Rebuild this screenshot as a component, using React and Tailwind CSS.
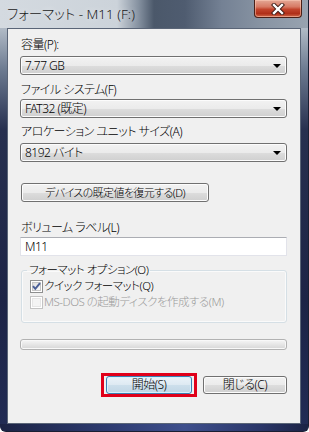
import React from "react";

const btnFace =
  "bg-[linear-gradient(#f2f2f2_0%,#ebebeb_50%,#dddddd_51%,#cfcfcf_100%)] border border-[#707070] rounded-[3px] shadow-[inset_0_0_0_1px_#fcfcfc]";

function Combo({ value }) {
  return (
    <div
      className={`h-[19px] w-[267px] flex items-center pl-[4px] pr-[5px] ${btnFace}`}
    >
      <span className="flex-1 text-[12px] leading-none text-black">{value}</span>
      <svg width="8" height="4" viewBox="0 0 8 4">
        <path d="M0 0H8L4 4Z" fill="#000" />
      </svg>
    </div>
  );
}

function Label({ children, className = "" }) {
  return (
    <div className={`h-[14px] text-[12px] leading-[14px] text-black ${className}`}>
      {children}
    </div>
  );
}

function Check({ checked, disabled, children }) {
  const id = checked ? "cbOn" : "cbOff";
  return (
    <div className="h-[16px] flex items-center gap-[1px]">
      <svg width="13" height="13" viewBox="0 0 13 13">
        <defs>
          <linearGradient id={id} x1="0" y1="0" x2="1" y2="1">
            <stop offset="0" stopColor={disabled ? "#f4f4f4" : "#dcdcdc"} />
            <stop offset="1" stopColor={disabled ? "#f4f4f4" : "#fbfbfb"} />
          </linearGradient>
        </defs>
        <rect x="0.5" y="0.5" width="12" height="12" fill="#fff" stroke={disabled ? "#c3c3c3" : "#8e8f8f"} />
        <rect x="2.5" y="2.5" width="8" height="8" fill={`url(#${id})`} stroke={disabled ? "#e6e6e6" : "#c6c6c6"} />
        {checked && (
          <path d="M3 6.2L5.3 8.8L10 3.2" fill="none" stroke="#4a5f97" strokeWidth="2" />
        )}
      </svg>
      <span className={`text-[11.5px] leading-none ${disabled ? "text-[#9a9a9a]" : "text-black"}`}>
        {children}
      </span>
    </div>
  );
}

export default function App() {
  return (
    <div className="w-[309px] h-[432px] overflow-hidden font-['Noto_Sans','Noto_Sans_CJK_JP',sans-serif] font-light [font-feature-settings:'palt'] tracking-[-0.5px]">
      <div className="w-[309px] h-[432px] flex flex-col rounded-br-[6px] rounded-bl-[6px] border-r border-b border-[#1a1f33] bg-[linear-gradient(180deg,#c3cbd4_0px,#aeb8c4_30px,#6c7a90_70px,#27304f_130px,#1d2446_300px,#222c55_100%)]">
        {/* title bar */}
        <div className="h-[28px] flex items-start bg-[linear-gradient(90deg,#d4dae0_0%,#ccd3da_38%,#8591a0_45%,#4b586a_50%,#4f5c70_60%,#748194_72%,#8894a3_85%,#98a3b0_100%)]">
          <div className="pl-[7px] pt-[5px] text-[13.5px] leading-[18px] tracking-normal text-[#1a1a1a] [text-shadow:0_0_6px_rgba(255,255,255,0.7)]">
            フォーマット - M11 (F:)
          </div>
          <div className="ml-auto mr-[6px] w-[48px] h-[18px] rounded-b-[4px] border border-t-0 border-[#4a2018] bg-[linear-gradient(#e4a896_0%,#d77a64_40%,#c2442c_55%,#b02f18_80%,#d0694a_100%)] flex items-center justify-center shadow-[inset_0_0_0_1px_rgba(255,210,190,0.5)]">
            <svg width="14" height="12" viewBox="0 0 14 12">
              <path d="M3 2L11 10M11 2L3 10" stroke="#3b1a14" strokeWidth="4.2" strokeLinecap="square" />
              <path d="M3 2L11 10M11 2L3 10" stroke="#fff" strokeWidth="2.4" strokeLinecap="square" />
            </svg>
          </div>
        </div>

        {/* client area */}
        <div className="ml-[7px] w-[294px] h-[396px] border border-[#5a6577] bg-[#f0f0f0] pl-[12px] pr-[13px] flex flex-col">
          <Label className="mt-[9px] pl-[1px]">容量(P):</Label>
          <div className="mt-[4px]">
            <Combo value="7.77 GB" />
          </div>
          <Label className="mt-[8px] pl-[1px]">ファイル システム(F)</Label>
          <div className="mt-[2px]">
            <Combo value="FAT32 (既定)" />
          </div>
          <Label className="mt-[7px] pl-[1px]">アロケーション ユニット サイズ(A)</Label>
          <div className="mt-[4px]">
            <Combo value="8192 バイト" />
          </div>

          <button
            className={`mt-[21px] ml-[1px] w-[188px] h-[19px] text-[11px] tracking-[-0.6px] leading-none text-black ${btnFace}`}
          >
            デバイスの既定値を復元する(D)
          </button>

          <Label className="mt-[19px] pl-[1px]">ボリューム ラベル(L)</Label>
          <div className="mt-[2px] w-[267px] h-[19px] bg-white border border-[#e2e3ea] border-t-[#abadb3] flex items-center pl-[4px] text-[12px] leading-none text-black">
            M11
          </div>

          <fieldset className="mt-[7px] ml-[1px] w-[266px] h-[60px] border border-[#d5dfe5] rounded-[3px] shadow-[inset_0_0_0_1px_#fafafa]">
            <legend className="ml-[5px] px-[2px] text-[11.5px] leading-[14px] text-black">
              フォーマット オプション(O)
            </legend>
            <div className="pl-[8px] pt-[1px]">
              <Check checked>クイック フォーマット(Q)</Check>
              <Check disabled>MS-DOS の起動ディスクを作成する(M)</Check>
            </div>
          </fieldset>

          <div className="mt-[16px] w-[267px] h-[11px] rounded-[3px] border border-[#b2b2b2] bg-[linear-gradient(#f6f6f6_0%,#e6e6e6_50%,#d6d6d6_100%)] shadow-[inset_0_0_0_1px_#f8f8f8]" />

          <div className="mt-[23px] w-[267px] flex items-center justify-end">
            <div className="border-[3px] border-[#e0001a] px-[2px]">
              <button className="block w-[86px] h-[18px] rounded-[3px] border border-[#3c7fb1] bg-[linear-gradient(#ebf3f9_0%,#dde9f2_50%,#cddfeb_51%,#c0d6e6_100%)] shadow-[inset_0_0_0_1px_#d6f2ff] text-[12px] leading-none text-black">
                開始(S)
              </button>
            </div>
            <button className={`ml-[6px] w-[84px] h-[18px] text-[12px] leading-none text-black ${btnFace}`}>
              閉じる(C)
            </button>
          </div>
        </div>

        {/* bottom frame */}
        <div className="flex-1 bg-[linear-gradient(90deg,#1c2344_0%,#2d3b70_35%,#3e4f8c_60%,#2a3668_85%,#1c2344_100%)] rounded-b-[6px]" />
      </div>
    </div>
  );
}
